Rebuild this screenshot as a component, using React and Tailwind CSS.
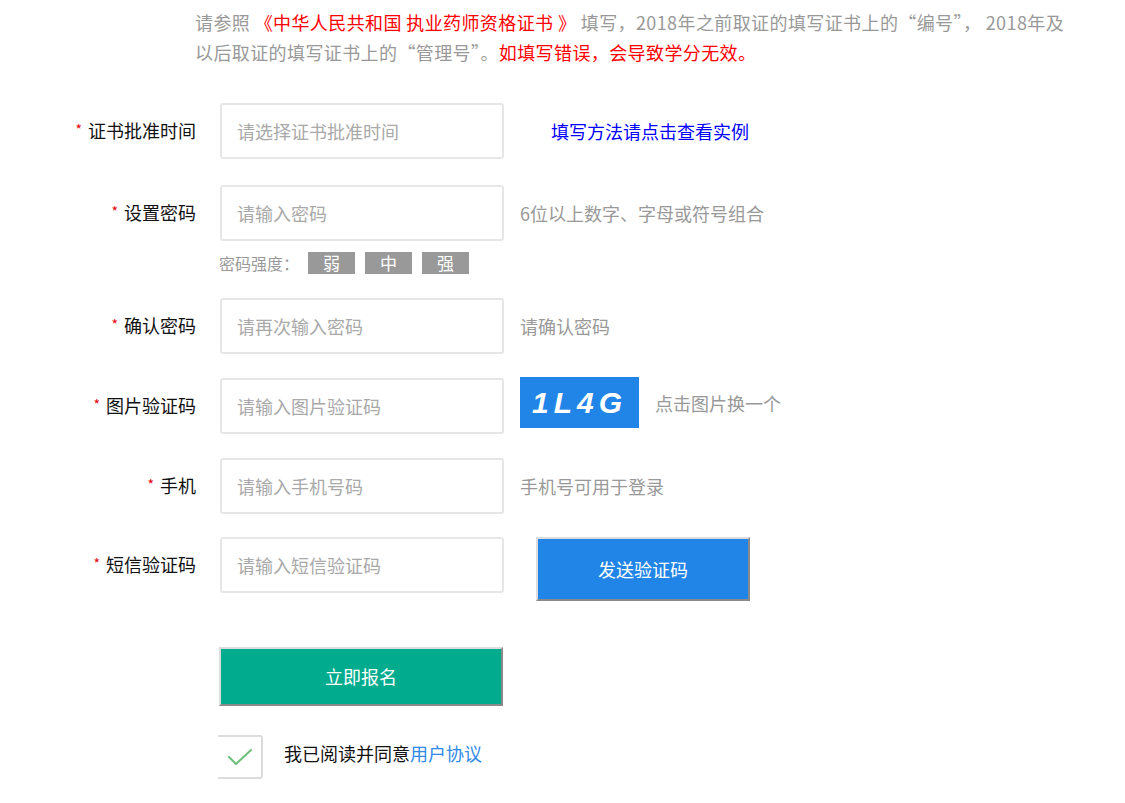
import React from 'react';

const font = { fontFamily: '"Microsoft YaHei", "Noto Sans CJK SC", sans-serif' };

const Label = ({ children }) => (
  <div className="w-[196px] shrink-0 text-right text-[18px] leading-[24px] text-[#111]">
    <span className="text-[14px] text-red-600 relative top-[-3px] mr-[6px]">*</span>
    {children}
  </div>
);

const Input = ({ placeholder }) => (
  <input
    className="ml-[24px] w-[284px] h-[56px] shrink-0 border-2 border-[#e6e6e6] rounded-[3px] pl-[15px] text-[18px] outline-none placeholder:text-[#a9a9a9] text-[#333]"
    placeholder={placeholder}
  />
);

const Hint = ({ children }) => (
  <span className="ml-[16px] text-[18px] leading-[24px] text-[#999]">{children}</span>
);

export default function App() {
  return (
    <div className="w-[1125px] h-[803px] bg-white overflow-hidden" style={font}>
      <div className="pl-[195px] pt-[7px] w-[1100px] text-[18px] leading-[30px] tracking-[0.4px] text-[#999]">
        请参照 <span className="text-[#f00]">《中华人民共和国 执业药师资格证书 》</span> 填写，2018年之前取证的填写证书上的“编号”， 2018年及
        <br />
        以后取证的填写证书上的“管理号”。<span className="text-[#f00]">如填写错误，会导致学分无效。</span>
      </div>

      <div className="mt-[36px]">
        <div className="flex items-center h-[56px]">
          <Label>证书批准时间</Label>
          <Input placeholder="请选择证书批准时间" />
          <a className="ml-[47px] text-[18px] leading-[24px] text-[#0000ff]" href="#">填写方法请点击查看实例</a>
        </div>

        <div className="flex items-center h-[56px] mt-[26px]">
          <Label>设置密码</Label>
          <Input placeholder="请输入密码" />
          <Hint>6位以上数字、字母或符号组合</Hint>
        </div>
        <div className="flex items-center h-[22px] ml-[219px] mt-[11px] text-[16px] leading-[22px] text-[#999]">
          <span>密码强度：</span>
          <div className="flex gap-[10px] ml-[9px]">
            {['弱', '中', '强'].map((t) => (
              <span key={t} className="w-[47px] h-[22px] bg-[#999] text-white text-[17px] leading-[22px] text-center">{t}</span>
            ))}
          </div>
        </div>

        <div className="flex items-center h-[56px] mt-[24px]">
          <Label>确认密码</Label>
          <Input placeholder="请再次输入密码" />
          <Hint>请确认密码</Hint>
        </div>

        <div className="flex items-start h-[56px] mt-[24px]">
          <div className="h-[56px] flex items-center"><Label>图片验证码</Label></div>
          <Input placeholder="请输入图片验证码" />
          <div className="ml-[16px] mt-[-1px] w-[119px] h-[51px] bg-[#2185e8] flex items-center justify-center text-white italic font-bold text-[30px] tracking-[5px]" style={{ fontFamily: '"Liberation Sans", Arial, sans-serif' }}>
            1L4G
          </div>
          <span className="ml-[16px] h-[51px] flex items-center text-[18px] text-[#999]">点击图片换一个</span>
        </div>

        <div className="flex items-center h-[56px] mt-[24px]">
          <Label>手机</Label>
          <Input placeholder="请输入手机号码" />
          <Hint>手机号可用于登录</Hint>
        </div>

        <div className="flex items-start mt-[23px]">
          <div className="h-[56px] flex items-center"><Label>短信验证码</Label></div>
          <Input placeholder="请输入短信验证码" />
          <button className="ml-[32px] w-[214px] h-[64px] bg-[#2185e8] text-white text-[18px] border-2 border-t-[#dcdcdc] border-l-[#dcdcdc] border-r-[#8a8a8a] border-b-[#8a8a8a]">
            发送验证码
          </button>
        </div>

        <div className="ml-[219px] mt-[46px]">
          <button className="w-[284px] h-[59px] bg-[#00ab8e] text-white text-[18px] border-2 border-t-[#dcdcdc] border-l-[#dcdcdc] border-r-[#8a8a8a] border-b-[#8a8a8a]">
            立即报名
          </button>
        </div>

        <div className="flex items-center ml-[218px] mt-[29px]">
          <div className="w-[45px] h-[44px] border-2 border-l-0 border-[#dcdcdc] rounded-r-[3px] flex items-center justify-center">
            <svg width="28" height="20" viewBox="0 0 28 20">
              <path d="M3 10 L10 17 L25 3" fill="none" stroke="#6cbf7a" strokeWidth="2" strokeLinecap="round" strokeLinejoin="round" />
            </svg>
          </div>
          <span className="ml-[21px] mt-[-8px] text-[18px] text-[#111]">
            我已阅读并同意<a className="text-[#2f8ae8]" href="#">用户协议</a>
          </span>
        </div>
      </div>
    </div>
  );
}
